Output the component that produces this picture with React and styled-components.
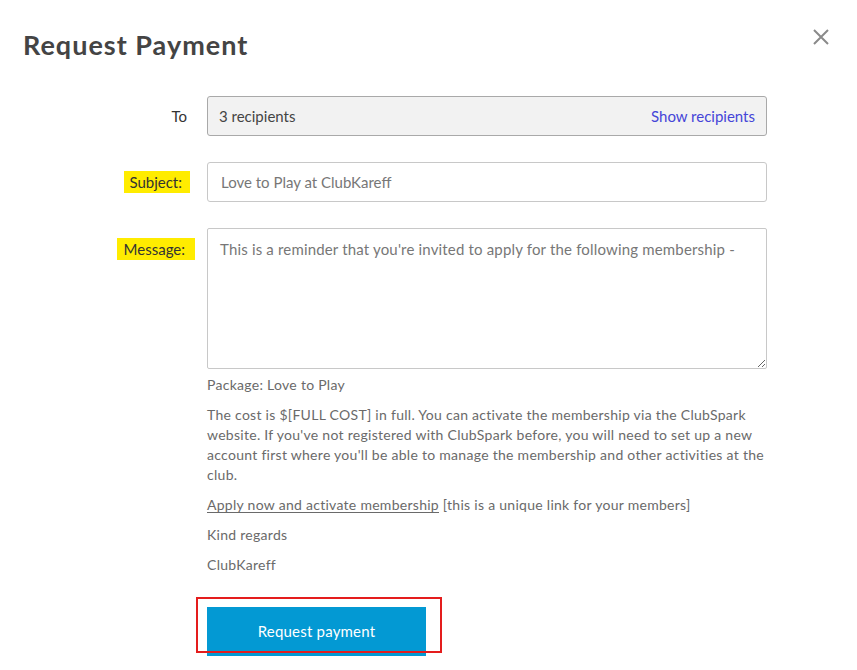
import React from 'react';
import styled, { createGlobalStyle } from 'styled-components';

const GlobalStyle = createGlobalStyle`
  body {
    margin: 0;
    background: #fff;
    font-family: Lato, "Open Sans", Arial, sans-serif;
  }
`;

const Modal = styled.div`
  position: relative;
  width: 857px;
  height: 670px;
  padding: 29px 0 0 23px;
  box-sizing: border-box;
  overflow: hidden;
`;

const Title = styled.h1`
  margin: 0;
  font-size: 27px;
  line-height: 32px;
  font-weight: 700;
  color: #444;
  letter-spacing: 1px;
`;

const CloseButton = styled.button`
  position: absolute;
  top: 28px;
  right: 27px;
  width: 18px;
  height: 18px;
  padding: 0;
  border: none;
  background: none;
  cursor: pointer;
`;

const Form = styled.div`
  display: grid;
  grid-template-columns: 164px 560px;
  column-gap: 20px;
  row-gap: 26px;
  margin-top: 35px;
`;

const Label = styled.div`
  display: flex;
  justify-content: flex-end;
  align-items: ${(p) => (p.$top ? 'flex-start' : 'center')};
  padding-top: ${(p) => (p.$top ? '10px' : '0')};
  font-size: 15px;
  color: #333;
`;

const LabelText = styled.span`
  line-height: 22px;
  background: ${(p) => (p.$highlight ? '#ffec00' : 'transparent')};
  padding: ${(p) => p.$pad || '0'};
  margin-right: ${(p) => p.$shift || '0'};
`;

const Field = styled.div`
  display: flex;
  align-items: center;
  justify-content: space-between;
  height: 40px;
  box-sizing: border-box;
  padding: 0 11px 0 11px;
  border: 1px solid ${(p) => (p.$readonly ? '#a9a9a9' : '#c8c8c8')};
  border-radius: 3px;
  background: ${(p) => (p.$readonly ? '#f2f2f2' : '#fff')};
  font-size: 15px;
  color: ${(p) => (p.$readonly ? '#444' : '#777')};
`;

const FieldValue = styled.span`
  padding-left: ${(p) => p.$indent || '0'};
`;

const ShowLink = styled.a`
  color: #4545d8;
  font-size: 15px;
  text-decoration: none;
  cursor: pointer;
`;

const MessageBox = styled.textarea`
  display: block;
  width: 560px;
  height: 141px;
  box-sizing: border-box;
  padding: 10px 12px;
  border: 1px solid #c8c8c8;
  border-radius: 2px;
  font-family: Lato, "Open Sans", Arial, sans-serif;
  font-size: 15px;
  line-height: 20px;
  letter-spacing: 0.17px;
  color: #777;
  resize: vertical;
  outline: none;
`;

const Body = styled.div`
  width: 560px;
  margin: 6px 0 0 184px;
  font-size: 14px;
  line-height: 20px;
  letter-spacing: 0.28px;
  color: #6a6a6a;
`;

const Para = styled.p`
  margin: 0 0 10px;
`;

const Underlined = styled.span`
  text-decoration: underline;
  text-underline-offset: 2px;
`;

const Actions = styled.div`
  position: relative;
  width: 219px;
  margin: 32px 0 0 184px;
`;

const PrimaryButton = styled.button`
  display: block;
  width: 219px;
  height: 49px;
  padding: 0 0 2px;
  border: none;
  background: #0399d3;
  color: #fff;
  font-family: Lato, "Open Sans", Arial, sans-serif;
  font-size: 15px;
  letter-spacing: 0.2px;
  cursor: pointer;
`;

const Annotation = styled.div`
  position: absolute;
  top: -10px;
  left: -11px;
  width: 246px;
  height: 56px;
  box-sizing: border-box;
  border: 2px solid #e41d1d;
  pointer-events: none;
`;

export default function App() {
  return (
    <>
      <GlobalStyle />
      <Modal>
        <Title>Request Payment</Title>
        <CloseButton aria-label="Close">
          <svg width="18" height="18" viewBox="0 0 18 18">
            <path d="M2 2 L16 16 M16 2 L2 16" stroke="#8a8a8a" strokeWidth="2" fill="none" />
          </svg>
        </CloseButton>

        <Form>
          <Label>
            <LabelText>To</LabelText>
          </Label>
          <Field $readonly>
            <FieldValue>3 recipients</FieldValue>
            <ShowLink>Show recipients</ShowLink>
          </Field>

          <Label>
            <LabelText $highlight $pad="0 8px 0 5px" $shift="-3px">Subject:</LabelText>
          </Label>
          <Field>
            <FieldValue $indent="2px">Love to Play at ClubKareff</FieldValue>
          </Field>

          <Label $top>
            <LabelText $highlight $pad="0 10px 0 7px" $shift="-8px">Message:</LabelText>
          </Label>
          <MessageBox defaultValue="This is a reminder that you're invited to apply for the following membership -" />
        </Form>

        <Body>
          <Para>Package: Love to Play</Para>
          <Para>
            The cost is $[FULL COST] in full. You can activate the membership via the ClubSpark
            website. If you've not registered with ClubSpark before, you will need to set up a new
            account first where you'll be able to manage the membership and other activities at the
            club.
          </Para>
          <Para>
            <Underlined>Apply now and activate membership</Underlined> [this is a unique link for your members]
          </Para>
          <Para>Kind regards</Para>
          <Para>ClubKareff</Para>
        </Body>

        <Actions>
          <PrimaryButton>Request payment</PrimaryButton>
          <Annotation />
        </Actions>
      </Modal>
    </>
  );
}
